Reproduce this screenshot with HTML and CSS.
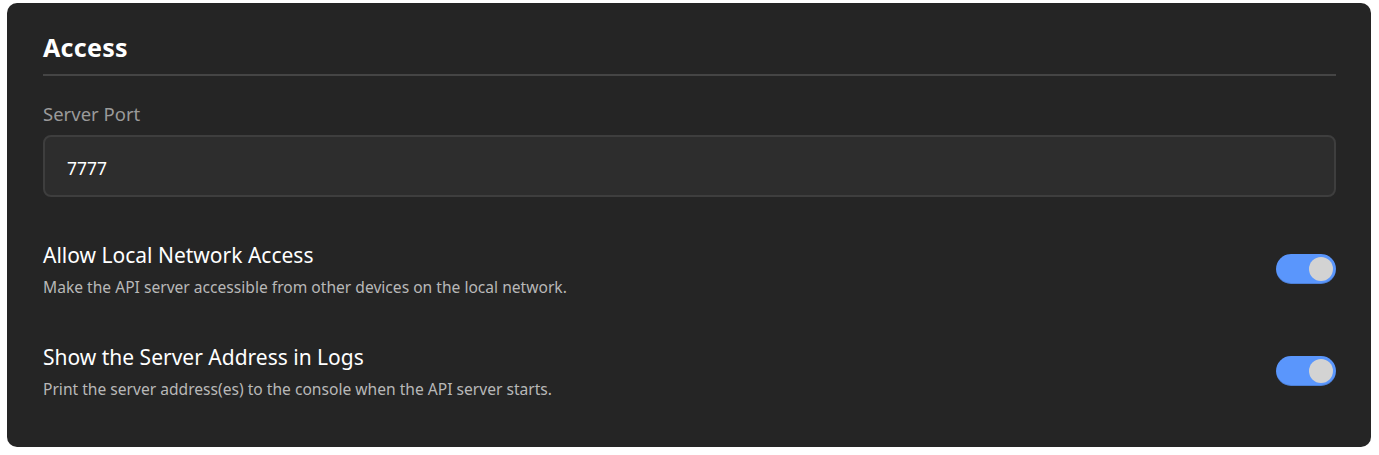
FILE: index.html
```html
<!DOCTYPE html>
<html lang="en">
<head>
  <meta charset="UTF-8" />
  <title>Access</title>
  <link rel="stylesheet" href="styles.css">
</head>
<body>
  <section class="panel">
    <h2>Access</h2>

    <div class="field">
      <label for="port">Server Port</label>
      <input type="text" id="port" value="7777" />
    </div>

    <div class="setting">
      <div class="setting-text">
        <h3>Allow Local Network Access</h3>
        <p>Make the API server accessible from other devices on the local network.</p>
      </div>
      <label class="toggle">
        <input type="checkbox" checked />
        <span class="slider"></span>
      </label>
    </div>

    <div class="setting">
      <div class="setting-text">
        <h3>Show the Server Address in Logs</h3>
        <p>Print the server address(es) to the console when the API server starts.</p>
      </div>
      <label class="toggle">
        <input type="checkbox" checked />
        <span class="slider"></span>
      </label>
    </div>
  </section>
</body>
</html>
```

FILE: styles.css
```css
body {
  font-family: "Noto Sans", sans-serif;
  background-color: #ffffff;
  margin: 0;
  padding: 3px 8px 9px 7px;
  color: #fff;
}

.panel {
  background: #252525;
  border-radius: 10px;
  padding: 25px 35px 48px 36px;
}

h2 {
  font-size: 25px;
  font-weight: bold;
  letter-spacing: 0.3px;
  margin: 0;
  line-height: 38px;
  padding-bottom: 8px;
  border-bottom: 2px solid #454545;
}

.field {
  margin-top: 26px;
}

.field label {
  display: block;
  color: #9a9a9a;
  font-size: 18.5px;
  line-height: 24px;
}

.field input {
  display: block;
  box-sizing: border-box;
  width: 100%;
  height: 62px;
  margin-top: 9px;
  padding: 3px 22px 0;
  background: #2d2d2d;
  border: 2px solid #3e3e3e;
  border-radius: 8px;
  color: #fff;
  font-family: inherit;
  font-size: 17.5px;
  outline: none;
}

.setting {
  display: flex;
  align-items: center;
  justify-content: space-between;
  margin-top: 44px;
}

.setting + .setting {
  margin-top: 46px;
}

.setting h3 {
  font-size: 21px;
  font-weight: normal;
  margin: 0;
  line-height: 28px;
}

.setting p {
  font-size: 15.6px;
  color: #b8b8b8;
  margin: 8px 0 0;
  line-height: 20px;
}

.toggle {
  position: relative;
  display: inline-block;
  width: 60px;
  height: 30px;
  flex-shrink: 0;
}

.toggle input {
  opacity: 0;
  width: 0;
  height: 0;
}

.slider {
  position: absolute;
  inset: 0;
  background: #5a96fc;
  border-radius: 15px;
  box-shadow: inset 0 -1px 0 rgba(0, 0, 0, 0.15);
}

.slider::before {
  content: "";
  position: absolute;
  width: 24px;
  height: 24px;
  top: 3px;
  left: 3px;
  background: #d3d3d3;
  border-radius: 50%;
}

.toggle input:checked + .slider::before {
  left: 33px;
}
```
